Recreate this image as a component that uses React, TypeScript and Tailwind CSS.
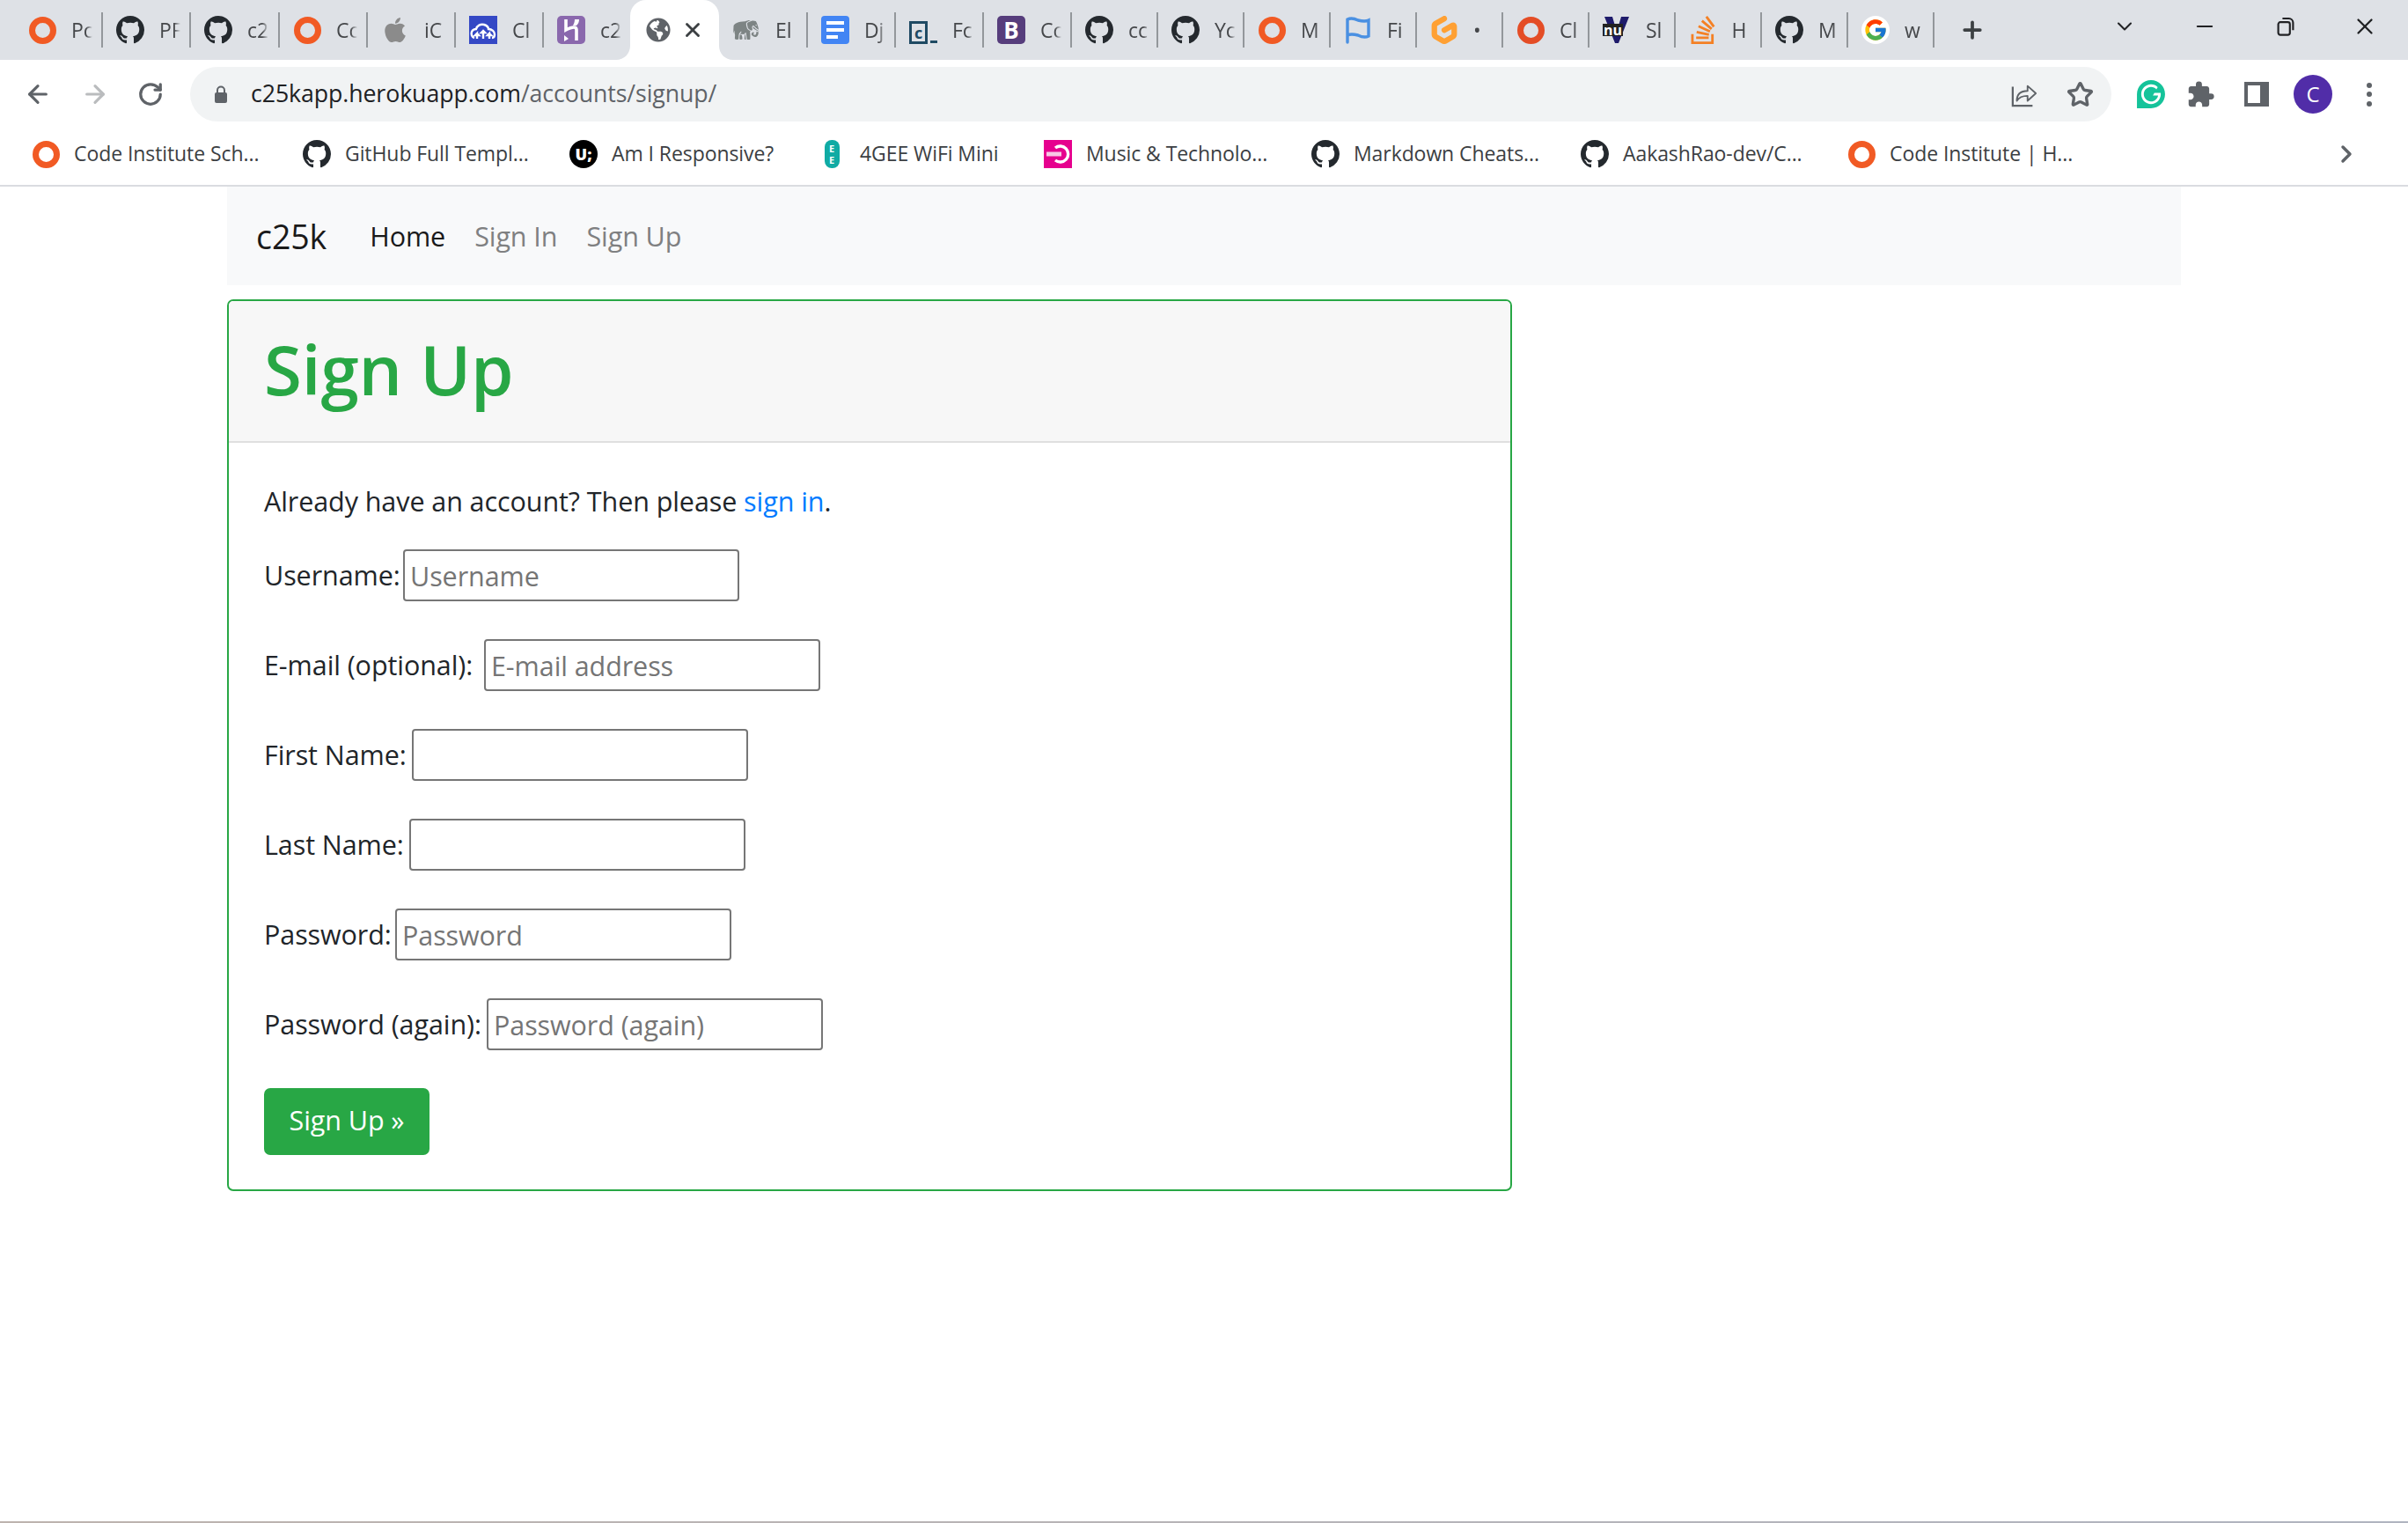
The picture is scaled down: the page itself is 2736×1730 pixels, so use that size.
import React from "react";
import { ArrowLeft, ArrowRight, ChevronDown, ChevronRight, Minus, Plus, RotateCw, Star, X } from "lucide-react";
import { BsGithub } from "react-icons/bs";
import { FaApple, FaGlobeAmericas } from "react-icons/fa";
import { FcGoogle } from "react-icons/fc";
import { GiElephant } from "react-icons/gi";
import { MdExtension } from "react-icons/md";
import { SiGitpod, SiGrammarly, SiStackoverflow } from "react-icons/si";

const Ring = ({ className = "border-[#f15a24]" }: { className?: string }) => (
  <div className={`h-[31px] w-[31px] rounded-full border-[7px] ${className}`} />
);
const Hub = () => <BsGithub className="h-[32px] w-[32px] text-[#24292e]" />;

const Cloud = () => (
  <svg viewBox="0 0 32 32" className="h-[32px] w-[32px]">
    <rect width="32" height="32" fill="#3448c5" />
    <path d="M6 25c-3-1-4-4-3-7 1-2 3-3 5-3 1-4 5-6 9-5 3 1 5 3 5 5 4 0 7 3 7 6 0 2-1 4-3 4" fill="none" stroke="#fff" strokeWidth="2.4" />
    <path d="M9 26v-6l-2 2h4l-2-2M16 26v-9M16 17l-2 2h4zM23 26v-6l-2 2h4l-2-2" fill="none" stroke="#fff" strokeWidth="2.4" />
  </svg>
);
const Heroku = () => (
  <svg viewBox="0 0 32 32" className="h-[32px] w-[32px]">
    <rect width="32" height="32" rx="5" fill="#8a68ad" />
    <path d="M10 4v12c4-2 7-3 9-3 2 0 3 1 3 3v12" fill="none" stroke="#fff" strokeWidth="3.6" />
    <path d="M20 4h5c0 3-1 5-3 7h-4c1-2 2-4 2-7zM8 22l5 4-5 3z" fill="#fff" />
  </svg>
);
const Docs = () => (
  <svg viewBox="0 0 32 32" className="h-[32px] w-[32px]">
    <rect width="32" height="32" rx="4" fill="#4285f4" />
    <rect x="6" y="6" width="20" height="4" fill="#fff" />
    <rect x="6" y="14" width="20" height="4" fill="#fff" />
    <rect x="6" y="22" width="13" height="4" fill="#fff" />
  </svg>
);
const Fc = () => (
  <div className="flex h-[32px] w-[32px] items-end">
    <div className="flex h-[26px] w-[21px] items-center justify-center border-[3px] border-[#1f4a63] text-[18px] font-bold leading-none text-[#1f4a63]">c</div>
    <div className="mb-[1px] ml-[3px] h-[3px] w-[8px] bg-[#1f4a63]" />
  </div>
);
const Boot = () => (
  <div className="flex h-[32px] w-[32px] items-center justify-center rounded-[5px] bg-[#563d7c] text-[26px] font-bold leading-none text-white">B</div>
);
const Flag = () => (
  <svg viewBox="0 0 32 32" className="h-[32px] w-[32px]">
    <path d="M4 30V4c4-2 8-1 12 1 4 1 8 2 12 0v18c-4 2-8 1-12-1-4-1-8-2-12 0" fill="none" stroke="#4a90e2" strokeWidth="3.4" strokeLinecap="round" />
  </svg>
);
const Nu = () => (
  <div className="relative h-[32px] w-[32px] overflow-hidden">
    <svg viewBox="0 0 32 32" className="h-[32px] w-[32px]">
      <path d="M2 1h9l5 17 5-17h9L18 31h-4z" fill="#1e1b6b" />
    </svg>
    <div className="absolute left-0 top-[9px] bg-[#222] px-[1px] text-[16px] font-bold leading-[14px] text-white">nu</div>
  </div>
);
const Resp = () => (
  <div className="flex h-[32px] w-[32px] items-center justify-center rounded-full bg-black text-[18px] font-extrabold leading-none text-white">U;</div>
);
const EE = () => (
  <div className="flex h-[32px] w-[32px] justify-center">
    <div className="flex h-[32px] w-[17px] flex-col items-center justify-center rounded-[8px] bg-[#10aba4] text-[11px] font-bold leading-[13px] text-white">
      <span>E</span>
      <span>E</span>
    </div>
  </div>
);
const Pink = () => (
  <svg viewBox="0 0 32 32" className="h-[32px] w-[32px]">
    <rect width="32" height="32" fill="#e6008e" />
    <path d="M13 9a9 9 0 1 1 0 14" fill="none" stroke="#fff" strokeWidth="3.4" />
    <rect x="3" y="13.500" width="17" height="5" fill="#f8c6e4" />
  </svg>
);

type TabData = { icon: React.ReactNode; title: string; width: string; noSep?: boolean };

const tabs: TabData[] = [
  { icon: <Ring />, title: "Pc", width: "w-[100px]" },
  { icon: <Hub />, title: "PF", width: "w-[100px]" },
  { icon: <Hub />, title: "c2", width: "w-[101px]" },
  { icon: <Ring />, title: "Cc", width: "w-[100px]" },
  { icon: <FaApple className="h-[32px] w-[32px] text-[#8b8b8b]" />, title: "iC", width: "w-[100px]" },
  { icon: <Cloud />, title: "Cl", width: "w-[100px]" },
  { icon: <Heroku />, title: "c2", width: "w-[98px]", noSep: true },
];
const tabsAfter: TabData[] = [
  { icon: <GiElephant className="h-[32px] w-[32px] text-[#7d8484]" />, title: "El", width: "w-[101px]" },
  { icon: <Docs />, title: "Dj", width: "w-[100px]" },
  { icon: <Fc />, title: "Fc", width: "w-[100px]" },
  { icon: <Boot />, title: "Cc", width: "w-[100px]" },
  { icon: <Hub />, title: "cc", width: "w-[98px]" },
  { icon: <Hub />, title: "Yc", width: "w-[98px]" },
  { icon: <Ring />, title: "M", width: "w-[98px]" },
  { icon: <Flag />, title: "Fi", width: "w-[98px]" },
  { icon: <SiGitpod className="h-[32px] w-[32px] text-[#ffa033]" />, title: "•", width: "w-[98px]" },
  { icon: <Ring className="border-[#e44d26]" />, title: "Cl", width: "w-[98px]" },
  { icon: <Nu />, title: "Sl", width: "w-[97.500px]" },
  { icon: <SiStackoverflow className="h-[32px] w-[32px] text-[#f48024]" />, title: "H", width: "w-[98.500px]" },
  { icon: <Hub />, title: "M", width: "w-[98px]" },
  { icon: <FcGoogle className="h-[32px] w-[32px] rounded-full bg-white p-[2px]" />, title: "w", width: "w-[98px]" },
];

const Tab = ({ icon, title, width, noSep }: TabData) => (
  <div className={`flex h-full shrink-0 items-center pl-[15px] ${width}`}>
    <div className="flex h-[32px] w-[32px] shrink-0 items-center justify-center">{icon}</div>
    <div className="ml-[17px] w-[24px] overflow-hidden whitespace-nowrap text-[23px] leading-[30px] text-[#45474a] [mask-image:linear-gradient(to_right,black_70%,transparent)]">
      {title}
    </div>
    {!noSep && <div className="ml-auto h-[40px] w-[2px] shrink-0 bg-[#93979b]" />}
  </div>
);

const bookmarks = [
  { icon: <Ring />, label: "Code Institute Sch...", width: "w-[308px]" },
  { icon: <Hub />, label: "GitHub Full Templ...", width: "w-[303px]" },
  { icon: <Resp />, label: "Am I Responsive?", width: "w-[282px]" },
  { icon: <EE />, label: "4GEE WiFi Mini", width: "w-[257px]" },
  { icon: <Pink />, label: "Music & Technolo...", width: "w-[304px]" },
  { icon: <Hub />, label: "Markdown Cheats...", width: "w-[306px]" },
  { icon: <Hub />, label: "AakashRao-dev/C...", width: "w-[303px]" },
  { icon: <Ring />, label: "Code Institute | H...", width: "w-[300px]" },
];

const fields = [
  { label: "Username:", labelWidth: "w-[158px]", placeholder: "Username" },
  { label: "E-mail (optional):", labelWidth: "w-[250px]", placeholder: "E-mail address" },
  { label: "First Name:", labelWidth: "w-[168px]", placeholder: "" },
  { label: "Last Name:", labelWidth: "w-[165px]", placeholder: "" },
  { label: "Password:", labelWidth: "w-[149px]", placeholder: "Password" },
  { label: "Password (again):", labelWidth: "w-[253px]", placeholder: "Password (again)" },
];

export default function App() {
  return (
    <div className="flex h-[1730px] w-[2736px] flex-col overflow-hidden bg-white font-['Open_Sans','Noto_Sans',sans-serif] tracking-[-0.005em] text-[#212529]">
      {/* Tab strip */}
      <div className="flex h-[68px] shrink-0 items-center bg-[#dee1e6] pl-[17px]">
        {tabs.map((t, i) => (
          <Tab key={i} {...t} />
        ))}
        <div className="relative flex h-full w-[101px] shrink-0 items-center rounded-t-[18px] bg-white pl-[18px]">
          <FaGlobeAmericas className="h-[28px] w-[28px] text-[#5f6368]" />
          <X className="ml-[12px] h-[26px] w-[26px] text-[#3c4043]" strokeWidth={2.6} />
          <svg viewBox="0 0 16 16" className="absolute -left-[16px] bottom-0 h-[16px] w-[16px]">
            <path d="M16 0v16H0c9 0 16-7 16-16z" fill="#fff" />
          </svg>
          <svg viewBox="0 0 16 16" className="absolute -right-[16px] bottom-0 h-[16px] w-[16px]">
            <path d="M0 0v16h16C7 16 0 9 0 0z" fill="#fff" />
          </svg>
        </div>
        {tabsAfter.map((t, i) => (
          <Tab key={i} {...t} />
        ))}
        <Plus className="ml-[28px] h-[30px] w-[30px] text-[#3c4043]" strokeWidth={3} />
        <ChevronDown className="ml-[144px] -mt-[8px] h-[28px] w-[28px] text-[#202124]" strokeWidth={1.8} />
        <Minus className="ml-[63px] -mt-[8px] h-[28px] w-[28px] text-[#202124]" strokeWidth={1.8} />
        <svg viewBox="0 0 20 20" className="ml-[66px] -mt-[8px] h-[24px] w-[24px] text-[#202124]" fill="none" stroke="currentColor" strokeWidth="1.8">
          <rect x="3" y="6" width="11" height="12" rx="2" />
          <path d="M7 2.500h6a4 4 0 0 1 4 4v7" />
        </svg>
        <X className="ml-[63px] -mt-[8px] h-[30px] w-[30px] text-[#202124]" strokeWidth={1.8} />
      </div>

      {/* Toolbar */}
      <div className="flex h-[72px] shrink-0 items-start pt-[8px]">
        <div className="flex h-[62px] w-[216px] shrink-0 items-center pl-[27px]">
          <ArrowLeft className="h-[32px] w-[32px] text-[#5f6368]" strokeWidth={2.4} />
          <ArrowRight className="ml-[33px] h-[32px] w-[32px] text-[#babcbe]" strokeWidth={2.4} />
          <RotateCw className="ml-[32px] h-[30px] w-[30px] text-[#5f6368]" strokeWidth={2.6} />
        </div>
        <div className="flex h-[62px] w-[2183px] shrink-0 items-center rounded-full bg-[#f1f3f4] pl-[28px] pr-[20px]">
          <svg viewBox="0 0 14 20" className="h-[20px] w-[14px] text-[#5f6368]">
            <path d="M3 9V5.500a4 4 0 0 1 8 0V9" fill="none" stroke="currentColor" strokeWidth="2" />
            <rect y="8" width="14" height="12" rx="2" fill="currentColor" />
          </svg>
          <div className="-mt-[2px] ml-[27px] whitespace-nowrap text-[26.700px] text-[#202124]">
            c25kapp.herokuapp.com<span className="text-[#5f6368]">/accounts/signup/</span>
          </div>
          <svg viewBox="0 0 32 32" className="ml-auto h-[30px] w-[30px] text-[#5f6368]" fill="none" stroke="currentColor" strokeWidth="2">
            <path d="M2 7v23h24" strokeWidth="2.4" />
            <path d="M7 24c0-8 5-12 13-12V6l10 9-10 9v-6c-6 0-10 1-13 6z" strokeLinejoin="round" />
          </svg>
          <Star className="ml-[33px] h-[31px] w-[31px] text-[#5f6368]" strokeWidth={2.6} />
        </div>
        <div className="flex h-[62px] items-center">
          <SiGrammarly className="ml-[29px] h-[32px] w-[32px] text-[#15c39a]" />
          <MdExtension className="ml-[24px] h-[33px] w-[33px] text-[#5f6368]" />
          <div className="ml-[33px] h-[28px] w-[28px] border-[4px] border-r-[10px] border-[#5f6368]" />
          <div className="ml-[28px] flex h-[44px] w-[44px] items-center justify-center rounded-full bg-[#512da8] text-[24px] text-white">C</div>
          <div className="ml-[39px] flex flex-col gap-[4.500px]">
            <div className="h-[6px] w-[6px] rounded-full bg-[#5f6368]" />
            <div className="h-[6px] w-[6px] rounded-full bg-[#5f6368]" />
            <div className="h-[6px] w-[6px] rounded-full bg-[#5f6368]" />
          </div>
        </div>
      </div>

      {/* Bookmarks */}
      <div className="flex h-[72px] shrink-0 items-center border-b-2 border-[#dadce0] pl-[36px]">
        {bookmarks.map((b) => (
          <div key={b.label} className={`flex shrink-0 items-center ${b.width}`}>
            <div className="flex h-[32px] w-[32px] items-center justify-center">{b.icon}</div>
            <div className="-mt-[2px] ml-[16px] whitespace-nowrap text-[23px] text-[#3c4043]">{b.label}</div>
          </div>
        ))}
        <ChevronRight className="ml-[251px] h-[32px] w-[32px] text-[#5f6368]" strokeWidth={2.6} />
      </div>

      {/* Page */}
      <div className="flex-1 pl-[258px]">
        <nav className="flex h-[112px] w-[2220px] items-center bg-[#f8f9fa] pl-[33px] pt-[2px] text-[30.500px]">
          <a className="text-[37.500px] text-[#1a1a1a]">c25k</a>
          <a className="ml-[49px] text-[#1a1a1a]">Home</a>
          <a className="ml-[33px] text-[#7f8081]">Sign In</a>
          <a className="ml-[33px] text-[#7f8081]">Sign Up</a>
        </nav>
        <section className="mt-[16px] h-[1013px] w-[1460px] rounded-[7px] border-2 border-[#28a745] text-[30.500px]">
          <header className="flex h-[161px] items-center rounded-t-[5px] border-b-2 border-[#dfdfdf] bg-[#f7f7f7] pl-[40px]">
            <h1 className="-mt-[6px] text-[78px] font-semibold leading-none text-[#28a745]">Sign Up</h1>
          </header>
          <div className="px-[40px] pt-[45px]">
            <p className="h-[42px] leading-[42px]">
              Already have an account? Then please <a className="text-[#007bff]">sign in</a>.
            </p>
            <form className="mt-[34px] flex flex-col gap-[43px]">
              {fields.map((f) => (
                <div key={f.label} className="flex h-[59px] items-center">
                  <label className={`shrink-0 whitespace-nowrap ${f.labelWidth}`}>{f.label}</label>
                  <input
                    placeholder={f.placeholder}
                    className="h-[59px] w-[382px] rounded-[4px] border-2 border-[#767676] px-[6px] text-[#212529] placeholder:text-[#757575]"
                  />
                </div>
              ))}
              <button type="button" className="h-[76px] w-[188px] rounded-[7px] bg-[#28a745] pb-[2px] text-white">
                Sign Up »
              </button>
            </form>
          </div>
        </section>
      </div>
      <div className="h-[2px] shrink-0 bg-gradient-to-r from-[#bdb3ae] to-[#b0b4c0]" />
    </div>
  );
}
